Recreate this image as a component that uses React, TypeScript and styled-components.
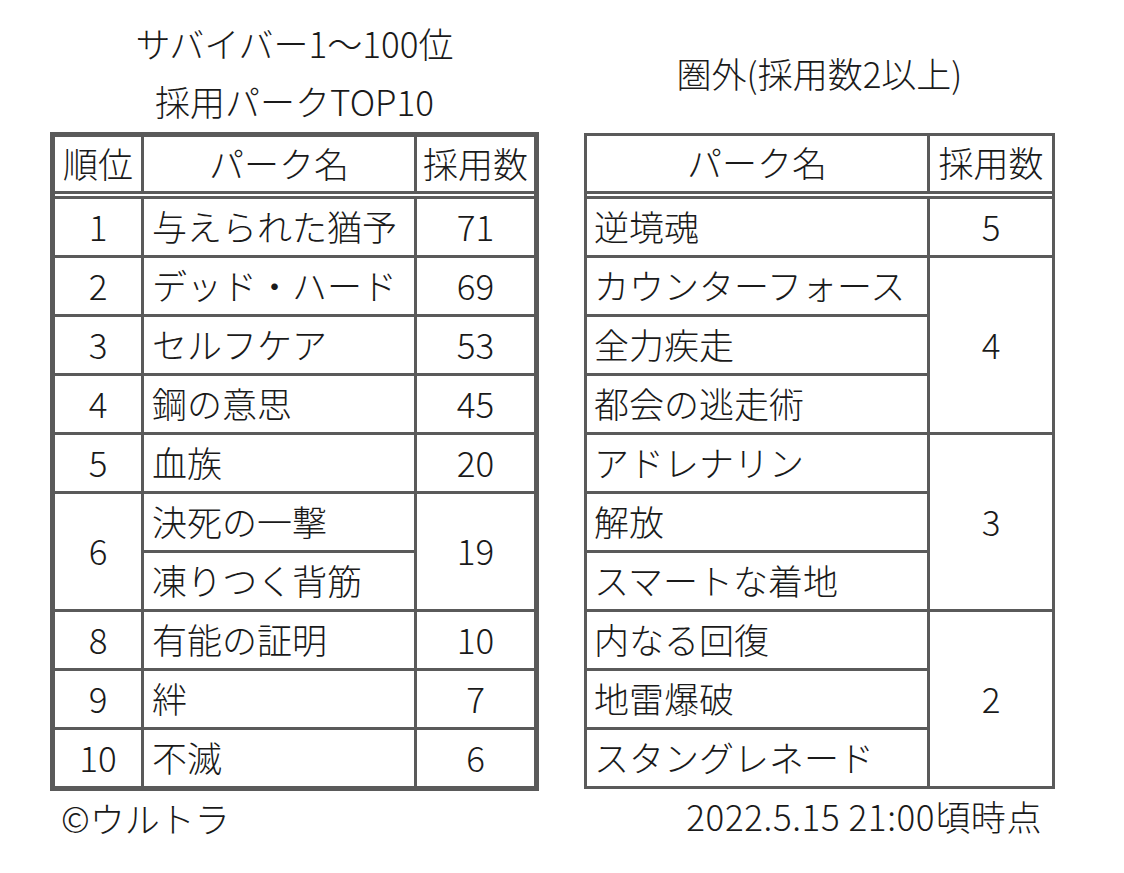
import React from 'react';
import styled, { createGlobalStyle } from 'styled-components';

const GlobalStyle = createGlobalStyle`
  html, body { margin: 0; padding: 0; background: #fff; }
  body {
    font-family: "Noto Sans CJK JP", "Noto Sans", sans-serif;
    color: #1a1a1a;
  }
`;

const LINE = '#5a5a5a';

const Page = styled.main`
  width: 1124px;
  height: 873px;
  box-sizing: border-box;
  padding-left: 50px;
  display: flex;
  gap: 45px;
  background: #fff;
`;

const Column = styled.section<{ $width: number }>`
  width: ${p => p.$width}px;
  display: flex;
  flex-direction: column;
`;

const Heading = styled.header<{ $height: number; $top: number }>`
  height: ${p => p.$height}px;
  box-sizing: border-box;
  padding-top: ${p => p.$top}px;
  display: flex;
  flex-direction: column;
  align-items: center;
`;

const Title = styled.div`
  font-size: 35px;
  line-height: 58px;
  font-weight: 300;
  white-space: nowrap;
`;

const Grid = styled.div<{ $cols: string; $border: number; $headH: number }>`
  display: grid;
  grid-template-columns: ${p => p.$cols};
  grid-template-rows: ${p => p.$headH}px 2px repeat(10, 56px);
  gap: 3px;
  background: ${LINE};
  border: ${p => p.$border}px solid ${LINE};
`;

const Cell = styled.div<{ $align?: 'left' | 'center'; $span?: number; $pad?: number }>`
  background: #fff;
  display: flex;
  align-items: center;
  justify-content: ${p => (p.$align === 'left' ? 'flex-start' : 'center')};
  padding-left: ${p => (p.$align === 'left' ? p.$pad ?? 8 : 0)}px;
  padding-bottom: 4px;
  grid-row: span ${p => p.$span ?? 1};
  font-size: 35px;
  font-weight: 300;
  white-space: nowrap;
  overflow: hidden;
`;

const Spacer = styled.div`
  grid-column: 1 / -1;
  background: #fff;
`;

const Footer = styled.footer<{ $align: 'left' | 'right' }>`
  font-size: 35px;
  line-height: 54px;
  font-weight: 300;
  white-space: nowrap;
  text-align: ${p => p.$align};
  padding-left: ${p => (p.$align === 'left' ? 11 : 0)}px;
  padding-right: ${p => (p.$align === 'right' ? 13 : 0)}px;
`;

const DateText = styled.span`
  letter-spacing: 0.6px;
`;

type LeftRow = { rank: string; names: string[]; count: string };

const leftRows: LeftRow[] = [
  { rank: '1', names: ['与えられた猶予'], count: '71' },
  { rank: '2', names: ['デッド・ハード'], count: '69' },
  { rank: '3', names: ['セルフケア'], count: '53' },
  { rank: '4', names: ['鋼の意思'], count: '45' },
  { rank: '5', names: ['血族'], count: '20' },
  { rank: '6', names: ['決死の一撃', '凍りつく背筋'], count: '19' },
  { rank: '8', names: ['有能の証明'], count: '10' },
  { rank: '9', names: ['絆'], count: '7' },
  { rank: '10', names: ['不滅'], count: '6' },
];

type RightGroup = { names: string[]; count: string };

const rightGroups: RightGroup[] = [
  { names: ['逆境魂'], count: '5' },
  { names: ['カウンターフォース', '全力疾走', '都会の逃走術'], count: '4' },
  { names: ['アドレナリン', '解放', 'スマートな着地'], count: '3' },
  { names: ['内なる回復', '地雷爆破', 'スタングレネード'], count: '2' },
];

export default function App() {
  return (
    <>
      <GlobalStyle />
      <Page>
        <Column $width={489}>
          <Heading $height={132} $top={14}>
            <Title>サバイバー1～100位</Title>
            <Title>採用パークTOP10</Title>
          </Heading>
          <Grid $cols="86px 270px 117px" $border={5} $headH={54}>
            <Cell>順位</Cell>
            <Cell>パーク名</Cell>
            <Cell>採用数</Cell>
            <Spacer />
            {leftRows.map(row => (
              <React.Fragment key={row.rank}>
                <Cell $span={row.names.length}>{row.rank}</Cell>
                <Cell $align="left">{row.names[0]}</Cell>
                <Cell $span={row.names.length}>{row.count}</Cell>
                {row.names.slice(1).map(n => (
                  <Cell key={n} $align="left">{n}</Cell>
                ))}
              </React.Fragment>
            ))}
          </Grid>
          <Footer $align="left">©ウルトラ</Footer>
        </Column>
        <Column $width={471}>
          <Heading $height={133} $top={44}>
            <Title>圏外(採用数2以上)</Title>
          </Heading>
          <Grid $cols="340px 122px" $border={3} $headH={55}>
            <Cell>パーク名</Cell>
            <Cell>採用数</Cell>
            <Spacer />
            {rightGroups.map(g => (
              <React.Fragment key={g.count}>
                <Cell $align="left" $pad={7}>{g.names[0]}</Cell>
                <Cell $span={g.names.length}>{g.count}</Cell>
                {g.names.slice(1).map(n => (
                  <Cell key={n} $align="left" $pad={7}>{n}</Cell>
                ))}
              </React.Fragment>
            ))}
          </Grid>
          <Footer $align="right"><DateText>2022.5.15 21:00頃時点</DateText></Footer>
        </Column>
      </Page>
    </>
  );
}
